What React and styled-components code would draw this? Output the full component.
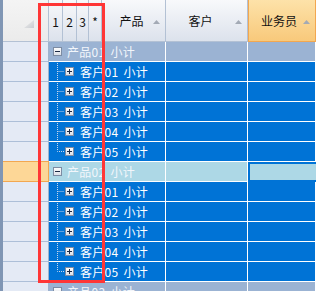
import styled, { createGlobalStyle } from "styled-components";

const GlobalStyle = createGlobalStyle`
  html, body {
    margin: 0;
    padding: 0;
    width: 316px;
    height: 291px;
    overflow: hidden;
    background: #9bb3d3;
  }
  body {
    font-family: "Noto Sans CJK SC", "Microsoft YaHei", sans-serif;
    font-size: 12px;
  }
`;

const palette = {
  sideBar: "#8096b4",
  headerTop: "#f8f9fb",
  headerBottom: "#dce2ec",
  headerLine: "#b3c1d4",
  rowHeader: "#e4eaf5",
  rowHeaderLine: "#adbfd8",
  group: "#9bb3d3",
  selected: "#0073d6",
  focusedGroup: "#add8e6",
  orange: "#fdd797",
  orangeLine: "#f2a750",
  annotation: "#ff3636",
};

const Screen = styled.div`
  position: relative;
  display: flex;
  width: 316px;
  height: 291px;
  overflow: hidden;
`;

const SideBar = styled.div`
  flex: 0 0 3px;
  background: ${palette.sideBar};
`;

const Grid = styled.div`
  flex: 1;
  display: flex;
  flex-direction: column;
  min-width: 0;
`;

const HeaderRow = styled.div`
  display: grid;
  grid-template-columns: 46px 14px 14px 12px 13px 64px 82px 1fr;
  height: 42px;
  flex: 0 0 42px;
`;

const HeaderCell = styled.div`
  position: relative;
  display: flex;
  align-items: center;
  justify-content: center;
  padding-right: ${({ $pad }) => $pad || 0}px;
  background: ${({ $active }) =>
    $active
      ? "linear-gradient(#fde2a9, #f8c97b)"
      : `linear-gradient(${palette.headerTop}, ${palette.headerBottom})`};
  border-right: 1px solid
    ${({ $active }) => ($active ? palette.orangeLine : palette.headerLine)};
  border-bottom: 1px solid
    ${({ $active }) => ($active ? palette.orangeLine : palette.headerLine)};
  border-left: ${({ $active }) =>
    $active ? `1px solid ${palette.orangeLine}` : "none"};
  color: #111;
  white-space: nowrap;
`;

const CornerCell = styled(HeaderCell)`
  justify-content: flex-end;
  padding-right: 14px;
  padding-top: 6px;
  background: linear-gradient(#f4f4f4, #ebebeb);
`;

const LevelCell = styled(HeaderCell)`
  font-size: 12px;
  padding-top: 1px;
`;

const SortArrow = styled.svg`
  position: absolute;
  right: 5px;
  top: 20px;
`;

const Row = styled.div`
  display: grid;
  grid-template-columns: 46px 117px 82px 1fr;
  height: 20px;
  flex: 0 0 20px;
`;

const RowHeader = styled.div`
  background: ${({ $current }) => ($current ? palette.orange : palette.rowHeader)};
  border-right: 1px solid
    ${({ $current }) => ($current ? palette.orangeLine : "#9fb2cd")};
  border-bottom: 1px solid
    ${({ $current }) => ($current ? palette.orangeLine : palette.rowHeaderLine)};
  border-top: ${({ $current }) =>
    $current ? `1px solid ${palette.orangeLine}` : "none"};
  margin-top: ${({ $current }) => ($current ? "-1px" : "0")};
`;

const rowBg = {
  group: palette.group,
  child: palette.selected,
  focused: palette.focusedGroup,
};

const Cell = styled.div`
  display: flex;
  align-items: center;
  background: ${({ $kind }) => rowBg[$kind]};
  border-right: 1px solid #fff;
  border-bottom: 1px solid #fff;
  color: #fff;
  white-space: nowrap;
  overflow: hidden;
  box-sizing: border-box;
`;

const FocusCell = styled(Cell)`
  border: 2px solid ${palette.selected};
  border-right: none;
`;

const TreeCell = styled(Cell)`
  padding-left: ${({ $kind }) => ($kind === "child" ? 0 : 4)}px;
`;

const Label = styled.span`
  margin-left: ${({ $kind }) => ($kind === "child" ? 6 : 5)}px;
  line-height: 19px;
  letter-spacing: 0.3px;
  word-spacing: 2px;
  color: ${({ $kind }) => ($kind === "child" ? "#fff" : "#f2f6fb")};
`;

const Annotation = styled.div`
  position: absolute;
  left: 38px;
  top: 3px;
  width: 67px;
  height: 280px;
  box-sizing: border-box;
  border: 3px solid ${palette.annotation};
  pointer-events: none;
`;

const ExpandBox = ({ open }) => (
  <svg width="9" height="9" viewBox="0 0 9 9" style={{ flex: "0 0 9px" }}>
    <defs>
      <linearGradient id="box" x1="0" y1="0" x2="0" y2="1">
        <stop offset="0" stopColor="#ffffff" />
        <stop offset="1" stopColor="#d9dee6" />
      </linearGradient>
    </defs>
    <rect x="0.5" y="0.5" width="8" height="8" fill="url(#box)" stroke="#7d8ca3" />
    <path d="M2 4.5h5" stroke="#1d2a44" strokeWidth="1" />
    {!open && <path d="M4.5 2v5" stroke="#1d2a44" strokeWidth="1" />}
  </svg>
);

const Connector = ({ last }) => (
  <svg width="16" height="20" viewBox="0 0 16 20" style={{ flex: "0 0 16px", marginTop: 1 }}>
    <path
      d={last ? "M8.5 -1V9.5H15" : "M8.5 -1V20M8.5 9.5H15"}
      stroke="#c9d7ec"
      strokeWidth="1"
      strokeDasharray="1 1"
      fill="none"
    />
  </svg>
);

const Arrow = () => (
  <SortArrow width="7" height="4" viewBox="0 0 7 4">
    <path d="M3.5 0L7 4H0z" fill="#a3aab5" />
  </SortArrow>
);

const groups = [
  { name: "产品01 小计", focused: false },
  { name: "产品02 小计", focused: true },
];
const customers = ["客户01 小计", "客户02 小计", "客户03 小计", "客户04 小计", "客户05 小计"];

const DataRow = ({ kind, label, last, current }) => (
  <Row>
    <RowHeader $current={current} />
    <TreeCell $kind={kind}>
      {kind === "child" ? (
        <>
          <Connector last={last} />
          <ExpandBox open={false} />
        </>
      ) : (
        <ExpandBox open />
      )}
      <Label $kind={kind}>{label}</Label>
    </TreeCell>
    <Cell $kind={kind} />
    {kind === "focused" ? <FocusCell $kind={kind} /> : <Cell $kind={kind} />}
  </Row>
);

export default function App() {
  return (
    <Screen>
      <GlobalStyle />
      <SideBar />
      <Grid>
        <HeaderRow>
          <CornerCell>
            <svg width="10" height="8" viewBox="0 0 10 8">
              <defs>
                <linearGradient id="tri" x1="0" y1="0" x2="1" y2="1">
                  <stop offset="0" stopColor="#f0f0f0" />
                  <stop offset="1" stopColor="#c9ccd1" />
                </linearGradient>
              </defs>
              <path d="M10 0V8H0z" fill="url(#tri)" />
            </svg>
          </CornerCell>
          <LevelCell>1</LevelCell>
          <LevelCell>2</LevelCell>
          <LevelCell>3</LevelCell>
          <LevelCell>*</LevelCell>
          <HeaderCell $pad={4}>
            产品
            <Arrow />
          </HeaderCell>
          <HeaderCell $pad={12}>
            客户
            <Arrow />
          </HeaderCell>
          <HeaderCell $active $pad={6}>
            业务员
            <Arrow />
          </HeaderCell>
        </HeaderRow>
        {groups.map((g) => (
          <div key={g.name} style={{ display: "contents" }}>
            <DataRow
              kind={g.focused ? "focused" : "group"}
              label={g.name}
              current={g.focused}
            />
            {customers.map((c, i) => (
              <DataRow key={c} kind="child" label={c} last={i === customers.length - 1} />
            ))}
          </div>
        ))}
        <DataRow kind="group" label="产品03 小计" />
      </Grid>
      <Annotation />
    </Screen>
  );
}
